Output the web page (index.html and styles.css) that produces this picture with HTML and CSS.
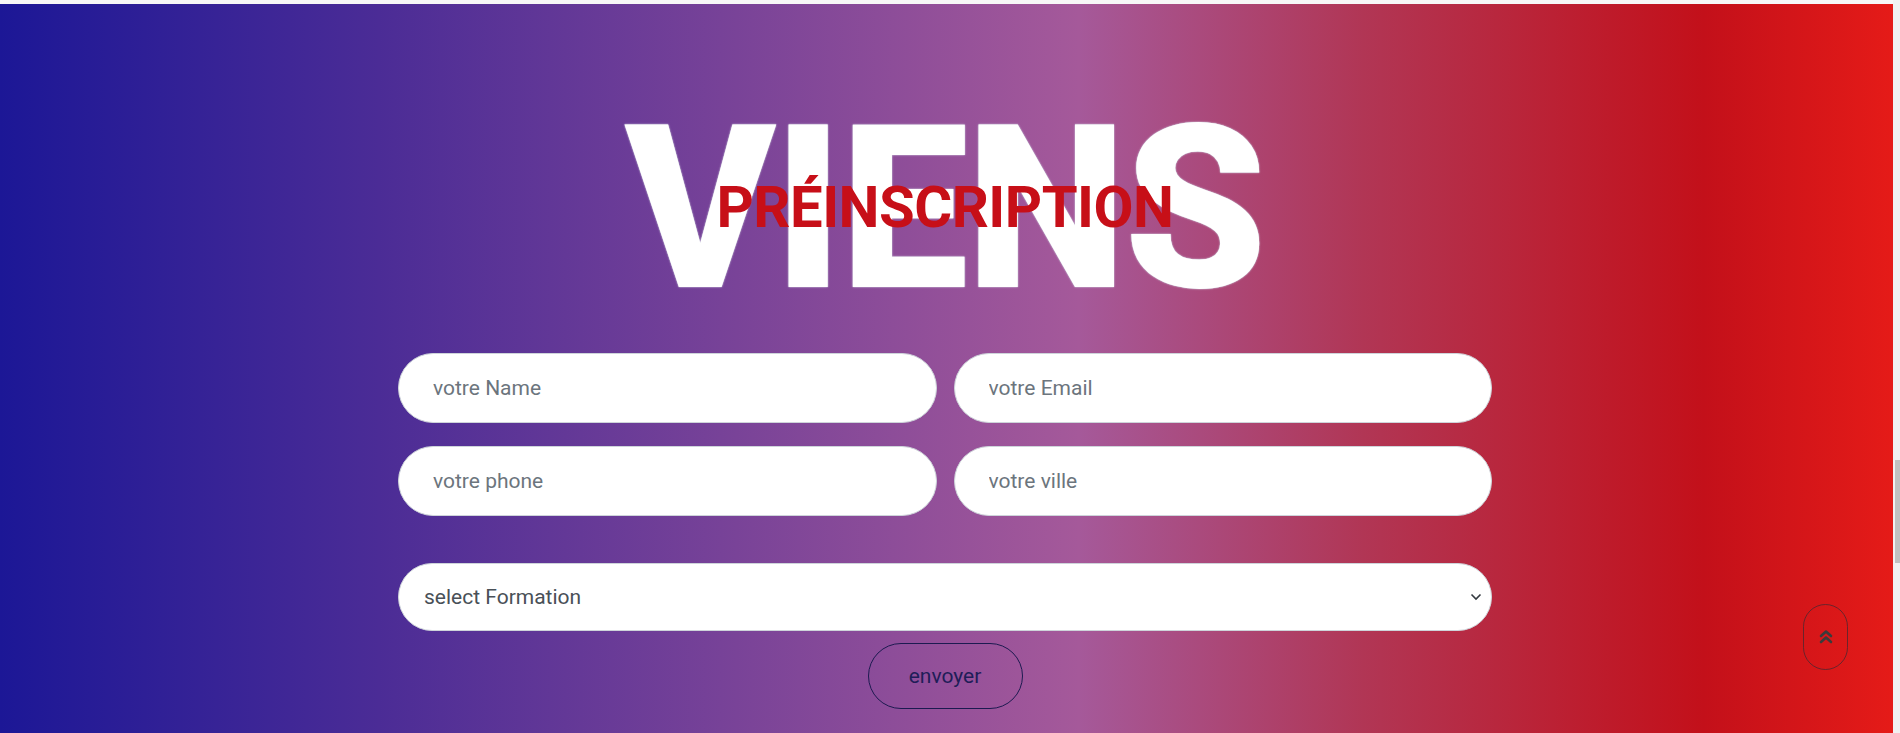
FILE: index.html
```html
<!DOCTYPE html>
<html lang="fr">
<head>
<meta charset="utf-8">
<title>Préinscription</title>
<link rel="stylesheet" href="styles.css">
</head>
<body>
<div class="page">
  <div class="main">
    <div class="top-strip"></div>
    <section class="hero">
      <div class="title">
        <span class="title-big">VIENS</span>
        <h2 class="title-sub">PRÉINSCRIPTION</h2>
      </div>
      <form class="form">
        <div class="fields">
          <input class="field" type="text" placeholder="votre Name">
          <input class="field" type="email" placeholder="votre Email">
          <input class="field" type="text" placeholder="votre phone">
          <input class="field" type="text" placeholder="votre ville">
        </div>
        <select class="select">
          <option>select Formation</option>
        </select>
        <button class="send" type="button">envoyer</button>
      </form>
    </section>
  </div>
  <div class="scrollbar"><div class="scrollbar-thumb"></div></div>
  <a class="to-top" href="#">
    <svg width="14" height="16" viewBox="0 0 14 16" aria-hidden="true">
      <path d="M2 7 L7 2.5 L12 7" fill="none" stroke="#3b3b3b" stroke-width="2.6" stroke-linecap="round" stroke-linejoin="round"/>
      <path d="M2 13 L7 8.5 L12 13" fill="none" stroke="#3b3b3b" stroke-width="2.6" stroke-linecap="round" stroke-linejoin="round"/>
    </svg>
  </a>
</div>
</body>
</html>
```

FILE: styles.css
```css
* { box-sizing: border-box; }

html, body {
  margin: 0;
  padding: 0;
  height: 733px;
  overflow: hidden;
  font-family: Roboto, "Liberation Sans", sans-serif;
}

.page {
  display: flex;
  height: 733px;
  position: relative;
}

.main {
  flex: 1;
  display: flex;
  flex-direction: column;
  min-width: 0;
}

.top-strip {
  height: 4px;
  background: #f7f7f7;
  flex: none;
}

.hero {
  flex: 1;
  background: linear-gradient(to right,
    #1c1796 0%,
    #4b2c96 20%,
    #a5599a 57%,
    #b13655 72%,
    #c3101a 90%,
    #e51b18 100%);
  display: flex;
  flex-direction: column;
  align-items: center;
  padding-top: 91px;
  padding-right: 3px;
}

.title {
  position: relative;
  display: flex;
  justify-content: center;
  align-items: center;
}

.title-big {
  font-family: Roboto, "Liberation Sans", sans-serif;
  font-weight: 900;
  font-size: 228px;
  line-height: 1;
  color: #ffffff;
  letter-spacing: -2px;
  text-shadow: 0 0 1px #c9c9da, 0 0 2px #d4d4e2;
}

.title-sub {
  position: absolute;
  left: 50%;
  top: 50%;
  transform: translate(-50%, calc(-50% - 2px));
  margin: 0;
  font-family: Roboto, "Liberation Sans", sans-serif;
  font-weight: 700;
  font-size: 58px;
  letter-spacing: -0.5px;
  line-height: 1;
  color: #c70f18;
  white-space: nowrap;
}

.form {
  width: 1094px;
  margin-top: 30px;
  display: flex;
  flex-direction: column;
  align-items: center;
}

.fields {
  width: 100%;
  display: grid;
  grid-template-columns: 1fr 1fr;
  column-gap: 17px;
  row-gap: 23px;
}

.field {
  height: 70px;
  border: 1px solid #ced4da;
  border-radius: 35px;
  background: #ffffff;
  padding: 0 20px 0 34px;
  font-family: Roboto, "Liberation Sans", sans-serif;
  font-size: 21px;
  color: #495057;
  outline: none;
}

.field::placeholder {
  color: #6c757d;
  opacity: 1;
}

.select {
  width: 100%;
  height: 68px;
  margin-top: 47px;
  border: 1px solid #ced4da;
  border-radius: 34px;
  background-color: #ffffff;
  background-image: url("data:image/svg+xml,%3Csvg xmlns='http://www.w3.org/2000/svg' width='12' height='8' viewBox='0 0 12 8'%3E%3Cpath d='M1.5 1.5 L6 6 L10.5 1.5' fill='none' stroke='%23343a40' stroke-width='1.6'/%3E%3C/svg%3E");
  background-repeat: no-repeat;
  background-position: right 9px center;
  background-size: 12px 8px;
  -webkit-appearance: none;
  appearance: none;
  padding: 0 30px 0 25px;
  font-family: Roboto, "Liberation Sans", sans-serif;
  font-size: 21px;
  color: #495057;
  outline: none;
}

.send {
  margin-top: 12px;
  width: 155px;
  height: 66px;
  border: 1px solid #1c1a50;
  border-radius: 33px;
  background: transparent;
  font-family: Roboto, "Liberation Sans", sans-serif;
  font-size: 21px;
  color: #1f1d58;
  cursor: pointer;
}

.scrollbar {
  width: 7px;
  flex: none;
  background: #f1f1f1;
  padding-top: 460px;
  padding-left: 2px;
}

.scrollbar-thumb {
  width: 5px;
  height: 103px;
  background: #c1c1c1;
}

.to-top {
  position: absolute;
  left: 1803px;
  top: 604px;
  width: 45px;
  height: 66px;
  border: 1px solid rgba(70, 40, 50, 0.75);
  border-radius: 23px;
  display: flex;
  align-items: center;
  justify-content: center;
}
```
